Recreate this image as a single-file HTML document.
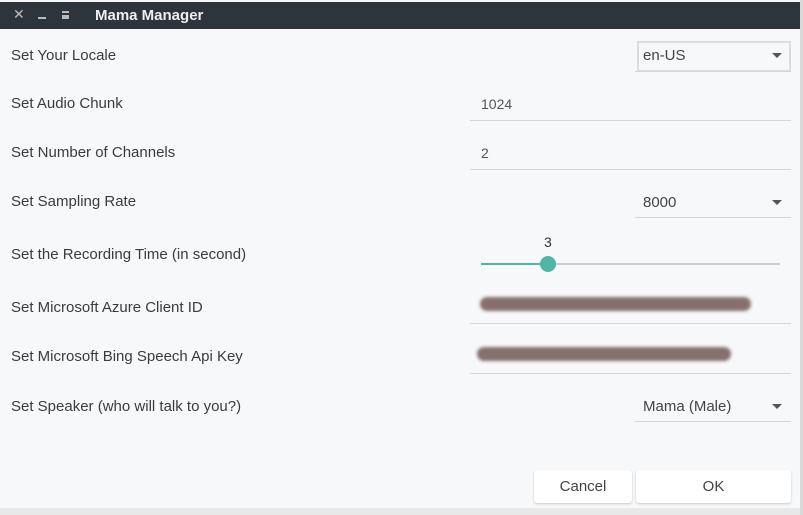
<!DOCTYPE html>
<html><head><style>
body{margin:0;width:803px;height:515px;overflow:hidden;background:#d9d9d9;font-family:"Liberation Sans",sans-serif;position:relative}
.win{position:absolute;left:0;top:0;width:800px;height:508px;background:#f7f8fa}
.title{position:absolute;left:0;top:2px;width:800px;height:27px;background:#2c353c;color:#eee}
.lab{position:absolute;left:11px;font-size:15px;color:#3b3b3b}
.line{position:absolute;height:1px;background:#d6d6d6}
.val{position:absolute;font-size:14px;color:#555}
.arr{position:absolute;width:0;height:0;border-left:5px solid transparent;border-right:5px solid transparent;border-top:5px solid #555}
.btn{position:absolute;top:470px;height:33px;background:#fff;border-radius:3px;box-shadow:0 1px 2px rgba(0,0,0,.2);font-size:15px;color:#444;text-align:center;line-height:33px}
.smear{position:absolute;background:#85706f;border-radius:8px;filter:blur(1.5px)}
</style></head><body>
<div class="win">
<div class="title">
<span style="position:absolute;left:13px;top:4px;font-size:14px;color:#bbb">✕</span>
<span style="position:absolute;left:38px;top:15px;width:8px;height:2px;background:#bbb"></span>
<span style="position:absolute;left:62px;top:9px;width:7px;height:2px;background:#bbb"></span>
<span style="position:absolute;left:62px;top:13px;width:7px;height:4px;background:#bbb"></span>
<span style="position:absolute;left:95px;top:5px;font-size:15px;font-weight:bold;color:#eee">Mama Manager</span>
</div>
<div class="lab" style="top:47px">Set Your Locale</div>
<div style="position:absolute;left:637px;top:41px;width:150px;height:27px;border:2px solid #ddd;background:#f7f8fa"></div>
<div class="val" style="left:643px;top:47px;color:#444;font-size:15px">en-US</div>
<div class="arr" style="left:772px;top:53px"></div>
<div class="line" style="left:635px;top:71px;width:156px"></div>

<div class="lab" style="top:95px">Set Audio Chunk</div>
<div class="val" style="left:481px;top:96px">1024</div>
<div class="line" style="left:470px;top:120px;width:321px"></div>

<div class="lab" style="top:144px">Set Number of Channels</div>
<div class="val" style="left:481px;top:145px">2</div>
<div class="line" style="left:470px;top:169px;width:321px"></div>

<div class="lab" style="top:193px">Set Sampling Rate</div>
<div class="val" style="left:643px;top:194px;color:#444;font-size:15px">8000</div>
<div class="arr" style="left:772px;top:200px"></div>
<div class="line" style="left:635px;top:217px;width:156px"></div>

<div class="lab" style="top:246px">Set the Recording Time (in second)</div>
<div class="val" style="left:544px;top:234px;font-size:14px;color:#333">3</div>
<div style="position:absolute;left:481px;top:263px;width:66px;height:2px;background:#4db6a8"></div>
<div style="position:absolute;left:547px;top:263px;width:233px;height:2px;background:#ccc"></div>
<div style="position:absolute;left:540px;top:256px;width:16px;height:16px;border-radius:50%;background:#4db6a8"></div>

<div class="lab" style="top:299px">Set Microsoft Azure Client ID</div>
<div class="smear" style="left:480px;top:297px;width:271px;height:14px"></div>
<div class="line" style="left:470px;top:323px;width:321px"></div>

<div class="lab" style="top:348px">Set Microsoft Bing Speech Api Key</div>
<div class="smear" style="left:477px;top:347px;width:254px;height:14px"></div>
<div class="line" style="left:470px;top:373px;width:321px"></div>

<div class="lab" style="top:398px">Set Speaker (who will talk to you?)</div>
<div class="val" style="left:643px;top:398px;color:#444;font-size:15px">Mama (Male)</div>
<div class="arr" style="left:772px;top:404px"></div>
<div class="line" style="left:635px;top:421px;width:156px"></div>

<div class="btn" style="left:534px;width:98px">Cancel</div>
<div class="btn" style="left:636px;width:155px">OK</div>
</div>
<div style="position:absolute;left:0;top:508px;width:800px;height:7px;background:#e8e8e8"></div>
</body></html>
